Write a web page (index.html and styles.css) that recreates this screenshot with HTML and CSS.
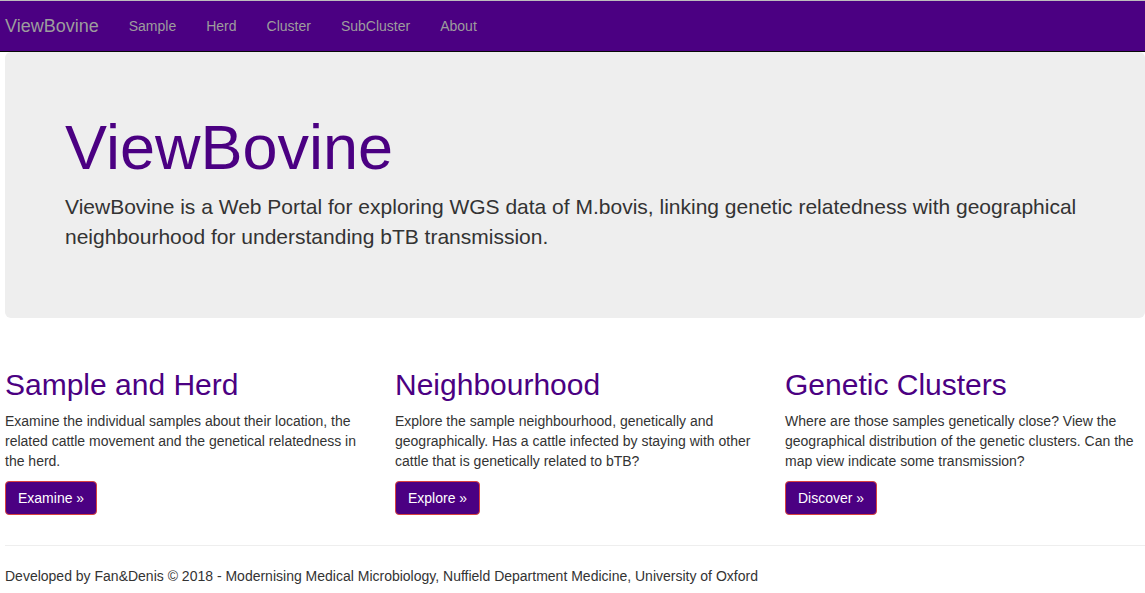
FILE: index.html
```html
<!DOCTYPE html>
<html>
<head>
<meta charset="utf-8">
<title>ViewBovine</title>
<link rel="stylesheet" href="styles.css">
</head>
<body>
<nav class="navbar">
  <div class="wrap navbar-inner">
    <a class="brand" href="#">ViewBovine</a>
    <ul class="nav">
      <li><a href="#">Sample</a></li>
      <li><a href="#">Herd</a></li>
      <li><a href="#">Cluster</a></li>
      <li><a href="#">SubCluster</a></li>
      <li><a href="#">About</a></li>
    </ul>
  </div>
</nav>
<main class="wrap">
  <section class="jumbotron">
    <h1>ViewBovine</h1>
    <p>ViewBovine is a Web Portal for exploring WGS data of M.bovis, linking genetic relatedness with geographical neighbourhood for understanding bTB transmission.</p>
  </section>
  <div class="row">
    <div class="col">
      <h2>Sample and Herd</h2>
      <p>Examine the individual samples about their location, the related cattle movement and the genetical relatedness in the herd.</p>
      <p><a class="btn" href="#">Examine &raquo;</a></p>
    </div>
    <div class="col">
      <h2>Neighbourhood</h2>
      <p>Explore the sample neighbourhood, genetically and geographically. Has a cattle infected by staying with other cattle that is genetically related to bTB?</p>
      <p><a class="btn" href="#">Explore &raquo;</a></p>
    </div>
    <div class="col">
      <h2>Genetic Clusters</h2>
      <p>Where are those samples genetically close? View the geographical distribution of the genetic clusters. Can the map view indicate some transmission?</p>
      <p><a class="btn" href="#">Discover &raquo;</a></p>
    </div>
  </div>
  <hr class="sep">
  <footer class="footer">
    <p>Developed by Fan&amp;Denis &copy; 2018 - Modernising Medical Microbiology, Nuffield Department Medicine, University of Oxford</p>
  </footer>
</main>
</body>
</html>
```
FILE: styles.css
```css
* { box-sizing: border-box; }
html, body { margin: 0; padding: 0; }
body {
  font-family: "Liberation Sans", Arial, sans-serif;
  font-size: 14px;
  line-height: 20px;
  color: #333;
  background: #fff;
  overflow: hidden;
}
a { text-decoration: none; }
.wrap {
  padding-left: 5px;
  padding-right: 0;
}
.navbar {
  background: #4b0082;
  border-top: 1px solid #bdbdbd;
  border-bottom: 1px solid #080808;
  height: 52px;
}
.navbar-inner {
  display: flex;
  align-items: stretch;
  height: 50px;
}
.brand {
  font-size: 18px;
  line-height: 20px;
  padding: 15px 15px 15px 0;
  color: #9d9d9d;
}
.nav {
  list-style: none;
  margin: 0;
  padding: 0;
  display: flex;
}
.nav a {
  display: block;
  padding: 15px;
  line-height: 20px;
  color: #9d9d9d;
}
.jumbotron {
  background: #eee;
  border-radius: 6px;
  padding: 61px 60px 50px 60px;
  margin-bottom: 30px;
  height: 266px;
}
.jumbotron h1 {
  font-size: 63px;
  line-height: 69px;
  font-weight: 500;
  color: #4b0082;
  margin: 0 0 10px;
}
.jumbotron p {
  font-size: 21px;
  line-height: 30px;
  margin: 0;
}
.row {
  display: grid;
  grid-template-columns: repeat(3, 390px);
}
.col {
  padding-right: 30px;
}
.col h2 {
  font-size: 30px;
  line-height: 33px;
  font-weight: 500;
  color: #4b0082;
  margin: 20px 0 10px;
}
.col p {
  margin: 0 0 10px;
}
.btn {
  display: inline-block;
  padding: 6px 12px;
  line-height: 20px;
  font-size: 14px;
  color: #fff;
  background: #4b0082;
  border: 1px solid #d9433f;
  border-radius: 4px;
}
.sep {
  border: 0;
  border-top: 1px solid #eee;
  margin: 20px 0 20px;
}
.footer p {
  margin: 0;
}
```
